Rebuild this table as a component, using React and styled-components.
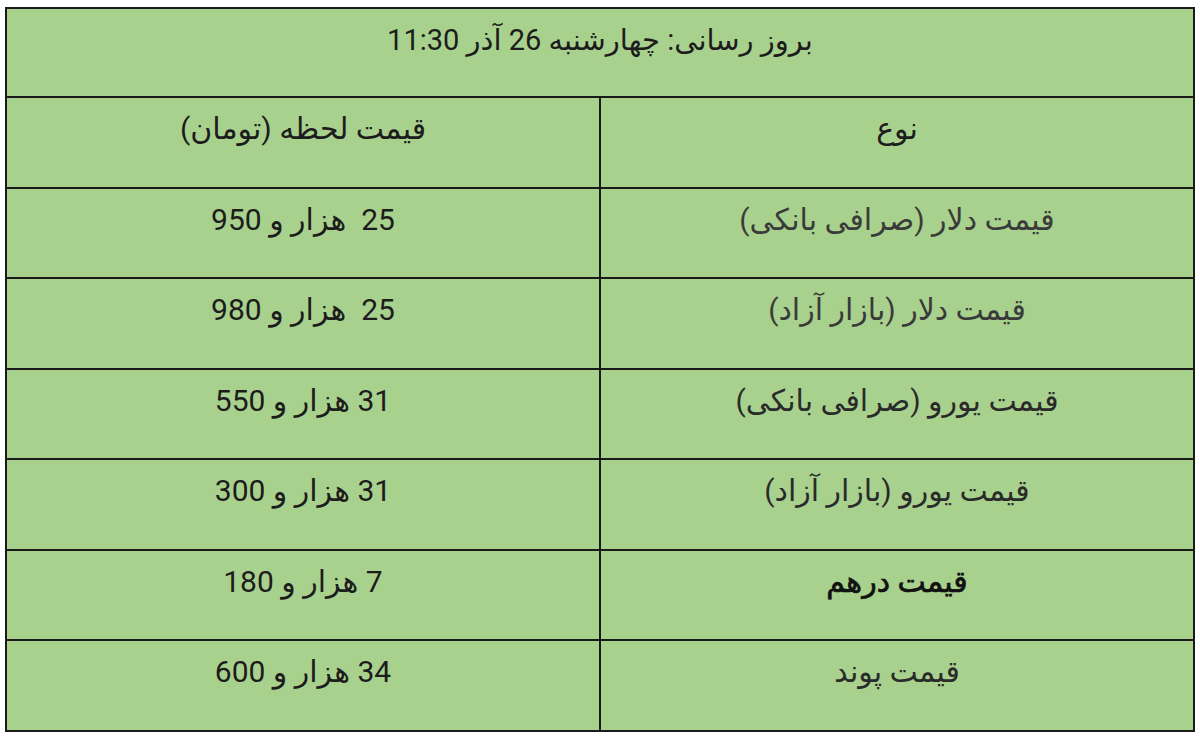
import React from 'react';
import styled, { createGlobalStyle } from 'styled-components';

const GlobalStyle = createGlobalStyle`
  html, body {
    margin: 0;
    background: #ffffff;
  }
  body {
    padding: 7px 5px;
    font-family: Roboto, "DejaVu Sans", sans-serif;
  }
`;

const Table = styled.table`
  width: 1190px;
  border-collapse: collapse;
  direction: rtl;
  background: #a9d18e;
  border: 2px solid #1a1a1a;
  table-layout: fixed;
`;

const Cell = styled.td`
  height: ${(p) => p.$h || 90.5}px;
  box-sizing: border-box;
  border: 2px solid #1a1a1a;
  vertical-align: top;
  text-align: center;
  padding: 13px 8px 0;
  font-size: ${(p) => p.$size || 30}px;
  line-height: 36px;
  color: ${(p) => p.$tone || '#1c1c1c'};
  -webkit-text-stroke: ${(p) => (p.$bold ? '0.7px' : '0')} currentColor;
  white-space: pre;
`;

const rows = [
  { name: 'قیمت دلار (صرافی بانکی)', value: '25  هزار و 950', tone: '#3a3a3a' },
  { name: 'قیمت دلار (بازار آزاد)', value: '25  هزار و 980', tone: '#3a3a3a' },
  { name: 'قیمت یورو (صرافی بانکی)', value: '31 هزار و 550', tone: '#2a2a2a' },
  { name: 'قیمت یورو (بازار آزاد)', value: '31 هزار و 300', tone: '#2a2a2a' },
  { name: 'قیمت درهم', value: '7 هزار و 180', tone: '#111', bold: true },
  { name: 'قیمت پوند', value: '34 هزار و 600', tone: '#2a2a2a' },
];

export default function App() {
  return (
    <>
      <GlobalStyle />
      <Table>
        <tbody>
          <tr>
            <Cell colSpan={2} $h={89} $size={29}>بروز رسانی: چهارشنبه 26 آذر 11:30</Cell>
          </tr>
          <tr>
            <Cell>نوع</Cell>
            <Cell>قیمت لحظه (تومان)</Cell>
          </tr>
          {rows.map((r) => (
            <tr key={r.name}>
              <Cell $tone={r.tone} $bold={r.bold}>{r.name}</Cell>
              <Cell>{r.value}</Cell>
            </tr>
          ))}
        </tbody>
      </Table>
    </>
  );
}
